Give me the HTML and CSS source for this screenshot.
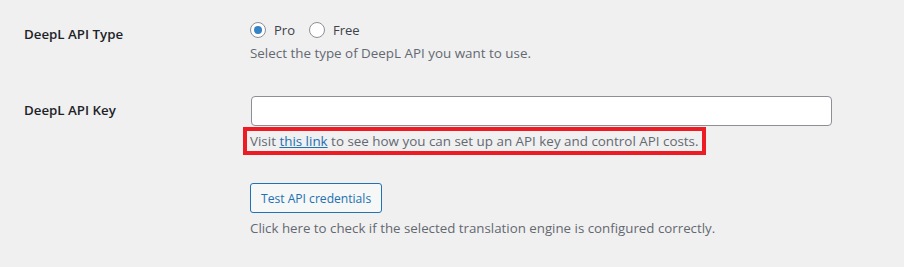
FILE: index.html
```html
<!DOCTYPE html>
<html>
	<head>
		<meta charset="utf-8">
		<title>DeepL settings</title>
		<link rel="stylesheet" href="styles.css">
	</head>
	<body>
		<div class="form-table">
			<div class="row row-type">
				<div class="th">DeepL API Type</div>
				<div class="td">
					<div class="radios">
						<label><input type="radio" name="api-type" checked />Pro</label>
						<label><input type="radio" name="api-type" />Free</label>
					</div>
					<p class="description">Select the type of DeepL API you want to use.</p>
				</div>
			</div>
			<div class="row row-key">
				<div class="th">DeepL API Key</div>
				<div class="td">
					<input type="text" class="regular-text" />
					<p class="description highlight">Visit <a href="javascript:;">this link</a> to see how you can set up an API key and control API costs.</p>
				</div>
			</div>
			<div class="row row-test">
				<div class="th"></div>
				<div class="td">
					<button type="button" class="button">Test API credentials</button>
					<p class="description">Click here to check if the selected translation engine is configured correctly.</p>
				</div>
			</div>
		</div>
	</body>
</html>
```

FILE: styles.css
```css
*{margin: 0;padding: 0;box-sizing: border-box;}
html,
body{width: 100%;height: 100%;overflow: hidden;}
body{background-color: #f0f0f1;color: #3c434a;font-family: "Open Sans", "Noto Sans", sans-serif;font-size: 13px;}
.form-table{padding-left: 24px;}
.row{display: grid;grid-template-columns: 226px 1fr;}
.th{font-size: 13.3px;font-weight: 600;line-height: 18px;color: #1d2327;}
.description{color: #646970;font-size: 13.4px;line-height: 18px;margin-top: 6px;}

.row-type .td{padding-top: 22px;}
.row-type .th{padding-top: 25px;}
.radios{display: flex;height: 16px;align-items: center;}
.radios label{display: flex;align-items: center;margin-right: 14px;line-height: 16px;}
.radios input{appearance: none;-webkit-appearance: none;width: 16px;height: 16px;border: 1px solid #8c8f94;
	border-radius: 50%;background-color: #fff;margin-right: 8px;position: relative;}
.radios input:checked::before{content: "";position: absolute;left: 3px;top: 3px;width: 8px;height: 8px;
	border-radius: 50%;background-color: #3582c4;}

.row-key{margin-top: 34px;}
.row-key .th{padding-top: 5px;}
.regular-text{display: block;width: 581px;height: 30px;border: 1px solid #8c8f94;border-radius: 4px;
	background-color: #fff;margin-left: 1px;}
.highlight{display: inline-block;margin: 1px 0 0 -7px;padding: 0 3px;border: 4px solid #ed1c24;line-height: 20px;}
.highlight a{color: #2271b1;text-decoration: underline;}

.row-test{margin-top: 28px;}
.button{display: block;height: 30px;padding: 0 10px;border: 1px solid #2271b1;border-radius: 3px;
	background-color: #f6f7f7;color: #2271b1;font-family: inherit;font-size: 12.1px;}
.row-test .description{font-size: 13.3px;}
```
